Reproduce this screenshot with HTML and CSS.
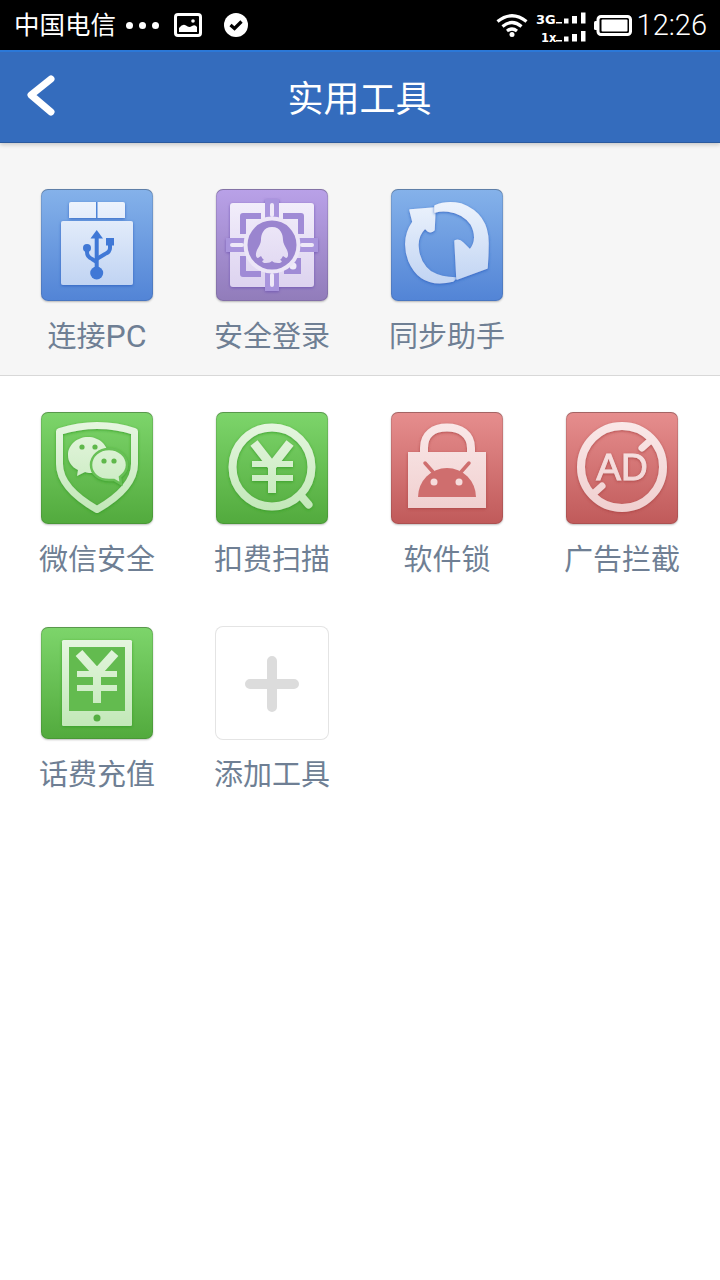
FILE: index.html
```html
<!DOCTYPE html>
<html lang="zh-CN">

<head>
  <meta charset="UTF-8" />
  <title>实用工具</title>
  <link rel="stylesheet" href="styles.css">
</head>

<body>
  <!-- shared gradients and glows for the tool icons -->
  <svg class="defs" width="0" height="0">
    <defs>
      <linearGradient id="lightBlue" gradientUnits="userSpaceOnUse" x1="0" y1="10" x2="0" y2="100">
        <stop offset="0" stop-color="#eef4fd" />
        <stop offset="1" stop-color="#bed2f2" />
      </linearGradient>
      <linearGradient id="lightPurple" gradientUnits="userSpaceOnUse" x1="0" y1="10" x2="0" y2="100">
        <stop offset="0" stop-color="#f3effb" />
        <stop offset="1" stop-color="#dcd2ef" />
      </linearGradient>
      <linearGradient id="lightGreen" gradientUnits="userSpaceOnUse" x1="0" y1="10" x2="0" y2="100">
        <stop offset="0" stop-color="#e6f6e0" />
        <stop offset="1" stop-color="#c2e8b8" />
      </linearGradient>
      <linearGradient id="lightRed" gradientUnits="userSpaceOnUse" x1="0" y1="10" x2="0" y2="100">
        <stop offset="0" stop-color="#fae8e8" />
        <stop offset="1" stop-color="#f0cfcf" />
      </linearGradient>
      <filter id="glowBlue" x="-20%" y="-20%" width="140%" height="140%">
        <feGaussianBlur stdDeviation=".45" />
        <feDropShadow dx="0" dy="1" stdDeviation="1.800" flood-color="#2a5fc0" flood-opacity=".85" />
      </filter>
      <filter id="glowPurple" x="-20%" y="-20%" width="140%" height="140%">
        <feGaussianBlur stdDeviation=".45" />
        <feDropShadow dx="0" dy="1" stdDeviation="1.800" flood-color="#6a4fb0" flood-opacity=".8" />
      </filter>
      <filter id="glowGreen" x="-20%" y="-20%" width="140%" height="140%">
        <feGaussianBlur stdDeviation=".45" />
        <feDropShadow dx="0" dy="1" stdDeviation="1.800" flood-color="#2f9a22" flood-opacity=".8" />
      </filter>
      <filter id="glowRed" x="-20%" y="-20%" width="140%" height="140%">
        <feGaussianBlur stdDeviation=".45" />
        <feDropShadow dx="0" dy="1" stdDeviation="1.800" flood-color="#a83c3c" flood-opacity=".8" />
      </filter>
    </defs>
  </svg>

  <!-- status bar -->
  <div class="status">
    <div class="status-left">
      <span class="carrier">中国电信</span>
      <span class="dots"><i></i><i></i><i></i></span>
      <svg class="ic-image" width="28" height="24" viewBox="0 0 28 24">
        <rect x="1.500" y="1.500" width="25" height="21" rx="2.500" fill="none" stroke="#fff" stroke-width="3" />
        <path d="M5 19V15Q9 10 12 12.500Q15 15 18 13Q21 11 23 14V19Z" fill="#fff" />
        <circle cx="19" cy="8" r="1.800" fill="#fff" />
      </svg>
      <svg class="ic-check" width="24" height="24" viewBox="0 0 24 24">
        <circle cx="12" cy="12" r="12" fill="#fff" />
        <path d="M6.500 12L10.500 15.500L17.500 8.500" fill="none" stroke="#000" stroke-width="3.200" />
      </svg>
    </div>
    <div class="status-right">
      <svg class="ic-wifi" width="32" height="24" viewBox="0 0 32 24">
        <g fill="none" stroke="#fff" stroke-width="3.200">
          <path d="M1.500 8.500Q16 -3 30.500 8.500" />
          <path d="M6.500 13.500Q16 5.500 25.500 13.500" />
          <path d="M11 18Q16 14 21 18" />
        </g>
        <circle cx="16" cy="21.500" r="2.500" fill="#fff" />
      </svg>
      <svg class="ic-signal" width="50" height="39" viewBox="0 0 50 39">
        <g class="signal-text">
          <text class="net-top" x="0" y="17.500">3G</text>
          <text class="net-bottom" x="5" y="35.500">1x</text>
        </g>
        <g fill="#fff">
          <rect x="20" y="16" width="6" height="1.500" />
          <rect x="28" y="12.500" width="4.500" height="5" />
          <rect x="36" y="10" width="5" height="7.500" />
          <rect x="45" y="6.500" width="4.500" height="11" />
          <rect x="20" y="34" width="6" height="1.500" />
          <rect x="28" y="30.500" width="4.500" height="5" />
          <rect x="36" y="28" width="5" height="7.500" />
          <rect x="45" y="25" width="4.500" height="10.500" />
        </g>
      </svg>
      <svg class="ic-battery" width="38" height="21" viewBox="0 0 38 21">
        <path d="M4 6H1.500Q0 6 0 7.500V13.500Q0 15 1.500 15H4Z" fill="#fff" />
        <rect x="4" y="1.500" width="32.500" height="18" rx="3" fill="none" stroke="#fff" stroke-width="3" />
        <rect x="7.500" y="4.500" width="26" height="12" rx="1" fill="#fff" />
      </svg>
      <span class="time">12:26</span>
    </div>
  </div>

  <!-- title bar -->
  <header class="title-bar">
    <svg class="back" width="36" height="51" viewBox="0 0 36 51">
      <path d="M27 7L7 23L27 40" fill="none" stroke="#fff" stroke-width="7" stroke-linecap="round" stroke-linejoin="round" />
    </svg>
    <h1>实用工具</h1>
  </header>

  <!-- connected tools -->
  <section class="tools tools-top">
    <div class="tool">
      <div class="tile blue">
        <svg width="112" height="112" viewBox="0 0 112 112">
          <g filter="url(#glowBlue)">
            <g fill="url(#lightBlue)">
              <path d="M30 13H82Q84 13 84 15V29H28V15Q28 13 30 13Z" />
              <rect x="20" y="32" width="72" height="64" rx="2" />
            </g>
            <rect x="55" y="13" width="1.500" height="16" fill="#4d84d8" />
            <g fill="none" stroke="#3f78d6" stroke-width="4">
              <path d="M55.700 46V80" />
              <path d="M46 60V63Q46 68 51 70L55.700 73" />
              <path d="M69 55V59Q69 63 64 65L55.700 70" />
            </g>
            <g fill="#3f78d6">
              <path d="M55.700 41L62 49.500H49.500Z" />
              <circle cx="46" cy="59" r="4" />
              <rect x="65" y="49" width="8" height="7.500" />
              <circle cx="55.700" cy="84" r="6.500" />
            </g>
          </g>
        </svg>
      </div>
      <span class="name">连接<span class="latin">PC</span></span>
    </div>
    <div class="tool">
      <div class="tile purple">
        <svg width="112" height="112" viewBox="0 0 112 112">
          <g filter="url(#glowPurple)">
            <rect x="14" y="14" width="84" height="84" rx="3" fill="url(#lightPurple)" />
            <g fill="none" stroke="#a08bd6" stroke-width="6" stroke-linejoin="round">
              <path d="M45 27H27V45" />
              <path d="M67 27H85V45" />
              <path d="M27 67V85H45" />
            </g>
            <path d="M68 69H85V85H68Z" fill="#a08bd6" />
            <circle cx="77" cy="77" r="3.500" fill="#f0ebf9" />
            <g fill="#a995dd">
              <rect x="49" y="10" width="14" height="19" />
              <rect x="49" y="83" width="14" height="19" />
              <rect x="10" y="49" width="19" height="14" />
              <rect x="83" y="49" width="19" height="14" />
            </g>
            <g fill="none" stroke="#eee9f8" stroke-width="4" stroke-linecap="round">
              <path d="M56 16V26" />
              <path d="M56 86V96" />
              <path d="M16 56H26" />
              <path d="M86 56H96" />
            </g>
            <circle cx="56" cy="56" r="28.500" fill="#ece6f7" />
            <circle cx="56" cy="56" r="24.500" fill="#9a85cf" />
            <path d="M56 38C47 38 45 46 45 51C45 54 43 57 41 61C39 66 40 69 42 69L45 67C46 69 47 70 48 71C45 72 46 74 50 74C53 74 55 73 56 72C57 73 59 74 62 74C66 74 67 72 64 71C65 70 66 69 67 67L70 69C72 69 73 66 71 61C69 57 67 54 67 51C67 46 65 38 56 38Z" fill="url(#lightPurple)" />
          </g>
        </svg>
      </div>
      <span class="name">安全登录</span>
    </div>
    <div class="tool">
      <div class="tile blue">
        <svg width="112" height="112" viewBox="0 0 112 112">
          <g fill="url(#lightBlue)" stroke="url(#lightBlue)" stroke-width="1.500" stroke-linejoin="round">
            <path filter="url(#glowBlue)" d="M19 21L44 19L43 41Q40 44 37 42L34 39Q26 47 27 58Q28 74 40 83Q50 89 65 89L62 92Q30 100 18 72Q10 50 22 33Z" />
            <path filter="url(#glowBlue)" d="M44 17Q55 12 70 15Q97 25 97 54Q97 66 96 79L66 90L64 52Q68 50 72 54L79 61Q88 50 80 35Q72 24 57 22Q50 21 44 23Z" />
          </g>
        </svg>
      </div>
      <span class="name">同步助手</span>
    </div>
  </section>

  <!-- local tools -->
  <section class="tools">
    <div class="tool">
      <div class="tile green">
        <svg width="112" height="112" viewBox="0 0 112 112">
          <g filter="url(#glowGreen)">
            <path d="M18.500 19.500Q38 13.500 56 13.500Q76 13.500 93.500 19.500V52Q93.500 76 56 97.500Q18.500 76 18.500 52Z" fill="none" stroke="url(#lightGreen)" stroke-width="7" stroke-linejoin="round" />
            <path d="M47 25C36 25 27 33 27 43C27 50 31 55 37 58L36 64L44 60C46 61 50 61 52 61C62 61 67 52 67 43C67 33 58 25 47 25Z" fill="url(#lightGreen)" />
            <path d="M68 37C58 37 50 44 50 53C50 62 58 68 68 68C70 68 71 68 73 68L80 72L79 65C83 62 86 58 86 53C86 44 78 37 68 37Z" fill="url(#lightGreen)" stroke="#68c057" stroke-width="2.500" />
            <g fill="#5fb84c">
              <circle cx="41" cy="35" r="2.600" />
              <circle cx="54" cy="35" r="2.600" />
              <circle cx="63" cy="49" r="2.600" />
              <circle cx="73" cy="49" r="2.600" />
            </g>
          </g>
        </svg>
      </div>
      <span class="name">微信安全</span>
    </div>
    <div class="tool">
      <div class="tile green">
        <svg width="112" height="112" viewBox="0 0 112 112">
          <g filter="url(#glowGreen)" fill="none" stroke="url(#lightGreen)">
            <circle cx="56" cy="55" r="39.500" stroke-width="8" />
            <path d="M86 85L92.500 92.500" stroke-width="8" stroke-linecap="round" />
            <path d="M38 31L56 54L74 31" stroke-width="9" />
            <path d="M36 52H77M36 66H77" stroke-width="6" />
            <path d="M56 52V81" stroke-width="8" />
          </g>
        </svg>
      </div>
      <span class="name">扣费扫描</span>
    </div>
    <div class="tool">
      <div class="tile red">
        <svg width="112" height="112" viewBox="0 0 112 112">
          <g filter="url(#glowRed)">
            <path d="M33 42V36C33 22 43 15.500 56 15.500C69 15.500 80 22 80 36V42" fill="none" stroke="url(#lightRed)" stroke-width="8" />
            <rect x="17" y="40" width="78" height="56" fill="url(#lightRed)" />
            <path d="M27 85A29 29 0 0 1 85 85Z" fill="#cf6e6e" />
            <path d="M34 51L42 60M78 51L70 60" stroke="#cf6e6e" stroke-width="3.500" stroke-linecap="round" />
            <circle cx="43" cy="70" r="3.500" fill="#f6dcdc" />
            <circle cx="68" cy="70" r="3.500" fill="#f6dcdc" />
          </g>
        </svg>
      </div>
      <span class="name">软件锁</span>
    </div>
    <div class="tool">
      <div class="tile red">
        <svg width="112" height="112" viewBox="0 0 112 112">
          <g filter="url(#glowRed)">
            <circle cx="56" cy="55" r="41" fill="none" stroke="url(#lightRed)" stroke-width="8" />
            <path d="M86 27L76 36M26 83L36 74" fill="none" stroke="url(#lightRed)" stroke-width="7" stroke-linecap="round" />
            <text class="ad" x="56" y="68" fill="url(#lightRed)" stroke="url(#lightRed)" stroke-width=".9">AD</text>
          </g>
        </svg>
      </div>
      <span class="name">广告拦截</span>
    </div>
    <div class="tool">
      <div class="tile green">
        <svg width="112" height="112" viewBox="0 0 112 112">
          <g filter="url(#glowGreen)">
            <rect x="21" y="13" width="70" height="86" rx="1.500" fill="url(#lightGreen)" />
            <rect x="28" y="20" width="56" height="64" fill="#63bb50" />
            <circle cx="56" cy="91" r="3.500" fill="#55ae42" />
            <g fill="none" stroke="url(#lightGreen)">
              <path d="M38 26L56 46L74 26" stroke-width="9" />
              <path d="M36 47H76M36 61H76" stroke-width="6" />
              <path d="M56 46V76" stroke-width="8" />
            </g>
          </g>
        </svg>
      </div>
      <span class="name">话费充值</span>
    </div>
    <div class="tool">
      <div class="tile add">
        <svg width="112" height="112" viewBox="0 0 112 112">
          <path d="M56 34V80M34 57H78" fill="none" stroke="#dcdcdc" stroke-width="10" stroke-linecap="round" />
        </svg>
      </div>
      <span class="name">添加工具</span>
    </div>
  </section>
</body>

</html>
```

FILE: styles.css
```css
/* reset */
html,
body {
  margin: 0;
  padding: 0;
}

body {
  background-color: #fff;
  font-family: Roboto, "Noto Sans CJK SC", sans-serif;
}

.defs {
  position: absolute;
}

/* status bar */
.status {
  display: flex;
  justify-content: space-between;
  align-items: center;
  height: 50px;
  padding: 0 13px 0 14px;
  background-color: #000;
  color: #fff;
}

.status-left,
.status-right {
  display: flex;
  align-items: center;
}

.carrier {
  font-size: 25.5px;
  line-height: 50px;
}

.dots {
  display: flex;
  gap: 6px;
  margin-left: 10px;
}

.dots i {
  width: 7px;
  height: 7px;
  border-radius: 50%;
  background-color: #fff;
}

.ic-image {
  margin-left: 15px;
}

.ic-check {
  margin-left: 22px;
}

.ic-signal {
  margin-left: 8px;
}

.signal-text {
  fill: #fff;
  font-family: "DejaVu Sans", sans-serif;
  font-weight: bold;
}

.net-top {
  font-size: 13px;
}

.net-bottom {
  font-size: 11.5px;
}

.ic-battery {
  margin-left: 8px;
}

.time {
  margin-left: 5px;
  font-size: 29px;
  font-weight: 300;
  line-height: 50px;
}

/* title bar */
.title-bar {
  display: grid;
  grid-template-columns: 1fr auto 1fr;
  align-items: center;
  position: relative;
  height: 93px;
  box-sizing: border-box;
  padding-left: 24px;
  border-top: 2px solid #2b78d8;
  border-bottom: 1px solid #2b5a9e;
  background-color: #346cbd;
  box-shadow: 0 2px 4px rgba(0, 0, 0, .18);
}

.title-bar h1 {
  margin: 0 0 3px -25px;
  font-size: 36px;
  font-weight: 400;
  color: #fff;
}

/* tool grid */
.tools {
  display: grid;
  grid-template-columns: repeat(4, 174px);
  column-gap: 1px;
  row-gap: 44px;
  padding: 36px 0 0 10px;
}

.tools-top {
  padding: 46px 0 15px 10px;
  border-bottom: 1px solid #d8d8d8;
  background-color: #f6f6f6;
}

.tool {
  display: flex;
  flex-direction: column;
  align-items: center;
}

.name {
  margin-top: 13px;
  font-size: 29px;
  line-height: 46px;
  color: #6f7f94;
  white-space: nowrap;
}

.latin {
  font-size: 32px;
  line-height: 0;
}

/* icon tiles */
.tile {
  width: 112px;
  height: 112px;
  box-sizing: border-box;
  border-radius: 7px;
  box-shadow: inset 0 1px 0 rgba(0, 0, 0, .2), inset 0 0 0 1px rgba(0, 0, 0, .1), 0 1px 2px rgba(0, 0, 0, .25);
}

.tile svg {
  display: block;
}

.blue {
  background: linear-gradient(#85b2ea, #5284d6);
}

.purple {
  background: linear-gradient(#b9a1e8, #917cba);
}

.green {
  background: linear-gradient(#7dd56b, #52aa3d);
}

.red {
  background: linear-gradient(#e68e8e, #c05a5a);
}

.add {
  background-color: #fff;
  box-shadow: 0 0 0 1px #e4e4e4;
}

.ad {
  font-family: "Liberation Sans", sans-serif;
  font-size: 37px;
  text-anchor: middle;
}
```
